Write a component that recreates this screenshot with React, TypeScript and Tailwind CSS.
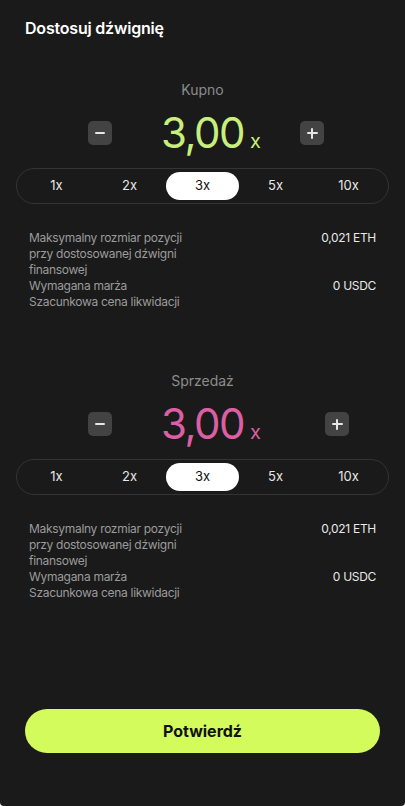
import React from "react";

const options = ["1x", "2x", "3x", "5x", "10x"];

function Minus() {
  return (
    <div className="w-6 h-6 rounded-[5px] bg-[#434343] flex items-center justify-center">
      <div className="w-[10px] h-[2px] bg-[#e6e6e6] rounded-sm" />
    </div>
  );
}

function Plus({ className = "" }: { className?: string }) {
  return (
    <div className={`w-6 h-6 rounded-[5px] bg-[#434343] flex items-center justify-center relative ${className}`}>
      <div className="w-[11px] h-[2px] bg-[#e6e6e6] rounded-sm" />
      <div className="absolute w-[2px] h-[11px] bg-[#e6e6e6] rounded-sm" />
    </div>
  );
}

function Section({
  label,
  color,
  plusMargin,
}: {
  label: string;
  color: string;
  plusMargin: string;
}) {
  return (
    <div className="flex flex-col">
      <div className="text-center text-[14px] leading-5 text-[#8c8c8c]">{label}</div>
      <div className="flex items-center pl-[88px] mt-[21px] h-6">
        <Minus />
        <div className="w-[188px] flex items-baseline pl-[49px]">
          <span className={`text-[42px] leading-none tracking-[-1.5px] ${color}`}>3,00</span>
          <span className={`text-[20px] leading-none ml-[6px] ${color}`}>x</span>
        </div>
        <Plus className={plusMargin} />
      </div>
      <div className="mx-4 mt-[23px] h-9 rounded-full border border-[#343434] p-[3px] grid grid-cols-5">
        {options.map((o) => (
          <div
            key={o}
            className={`flex items-center justify-center rounded-full text-[13px] ${
              o === "3x" ? "bg-white text-[#111]" : "text-[#e6e6e6]"
            }`}
          >
            {o}
          </div>
        ))}
      </div>
      <div className="px-[29px] mt-[26px] text-[12px] leading-4 tracking-[-0.3px] flex flex-col">
        <div className="flex justify-between">
          <div className="text-[#9b9b9b]">
            Maksymalny rozmiar pozycji
            <br />
            przy dostosowanej dźwigni
            <br />
            finansowej
          </div>
          <div className="text-[#e8e8e8]">0,021 ETH</div>
        </div>
        <div className="flex justify-between">
          <div className="text-[#9b9b9b]">Wymagana marża</div>
          <div className="text-[#e8e8e8]">0 USDC</div>
        </div>
        <div className="flex justify-between">
          <div className="text-[#9b9b9b]">Szacunkowa cena likwidacji</div>
        </div>
      </div>
    </div>
  );
}

export default function App() {
  return (
    <div
      className="w-[405px] h-[806px] bg-white"
      style={{ fontFamily: "Inter, 'Noto Sans', sans-serif" }}
    >
      <div className="w-full h-full bg-[#1a1a1a] rounded-b-[4px] flex flex-col">
        <div className="pl-[25px] pt-[16px] text-[16px] leading-6 font-semibold text-white tracking-[-0.2px]">
          Dostosuj dźwignię
        </div>
        <div className="mt-[40px]">
          <Section label="Kupno" color="text-[#c8ee7c]" plusMargin="" />
        </div>
        <div className="mt-[61px]">
          <Section label="Sprzedaż" color="text-[#db5fa2]" plusMargin="ml-[25px]" />
        </div>
        <div className="mt-auto mb-[53px] mx-[25px] h-[44px] rounded-full bg-[#d3fb5c] flex items-center justify-center text-[16px] font-bold text-[#111]">
          Potwierdź
        </div>
      </div>
    </div>
  );
}
